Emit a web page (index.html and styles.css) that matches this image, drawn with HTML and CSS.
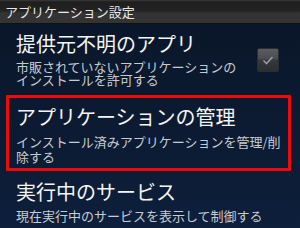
FILE: index.html
```html
<!DOCTYPE html>
<html lang="ja">
<head>
<meta charset="utf-8">
<link rel="stylesheet" href="styles.css">
</head>
<body>
<div class="screen">
  <div class="titlebar">アプリケーション設定</div>
  <div class="list">
    <div class="item item-first">
      <div class="text">
        <div class="title">提供元不明のアプリ</div>
        <div class="summary">
          <div class="line">市販されていないアプリケーションの</div>
          <div class="line">インストールを許可する</div>
        </div>
      </div>
      <div class="check">
        <svg width="22" height="24" viewBox="0 0 22 24">
          <path d="M6.5 12.5 L9.5 15.5 L15.5 9" fill="none" stroke="#9a9a9a" stroke-width="1.6"/>
        </svg>
      </div>
    </div>
    <div class="item item-mark">
      <div class="text">
        <div class="title">アプリケーションの管理</div>
        <div class="summary">
          <div class="line">インストール済みアプリケーションを管理/削</div>
          <div class="line">除する</div>
        </div>
      </div>
    </div>
    <div class="item item-last">
      <div class="text">
        <div class="title">実行中のサービス</div>
        <div class="summary">
          <div class="line">現在実行中のサービスを表示して制御する</div>
        </div>
      </div>
    </div>
  </div>
</div>
</body>
</html>
```
FILE: styles.css
```css
html, body {
  margin: 0;
  padding: 0;
}
body {
  width: 300px;
  height: 228px;
  overflow: hidden;
  font-family: "Noto Sans CJK JP", "Noto Sans", sans-serif;
  background: #0c1a2f;
}
.screen {
  width: 300px;
  height: 228px;
  display: flex;
  flex-direction: column;
  background: linear-gradient(180deg, #0a1628 0%, #0c1b33 60%, #0d1f3b 100%);
}
.titlebar {
  height: 24px;
  box-sizing: border-box;
  padding-left: 5px;
  font-size: 13px;
  line-height: 24px;
  color: #e8e8e8;
  background: linear-gradient(180deg, #3a3a3a 0px, #1e1e1e 2px, #232323 11px, #333333 13px, #343434 23px);
  border-bottom: 1px solid #111;
}
.list {
  display: flex;
  flex-direction: column;
}
.item {
  display: flex;
  align-items: center;
  color: #ffffff;
}
.item-first {
  padding: 8px 21px 0 16px;
  height: 70px;
  box-sizing: border-box;
}
.text {
  flex: 1;
}
.title {
  font-size: 20px;
  line-height: 24px;
  color: #f4f4f4;
  white-space: nowrap;
}
.summary {
  margin-top: 4px;
  font-size: 13px;
  color: #c8ccd2;
  white-space: nowrap;
}
.summary .line {
  height: 13px;
  line-height: 13px;
}
.item-first .text {
  align-self: flex-start;
}
.check {
  width: 22px;
  height: 24px;
  box-sizing: border-box;
  border: 1px solid #2a2f36;
  border-radius: 2px;
  background: linear-gradient(180deg, #5a5c60 0%, #4a4c50 45%, #36383c 50%, #2c2e32 100%);
  margin-top: -6px;
}
.check svg {
  display: block;
  margin: -1px;
}
.item-mark {
  margin: 1px 9px 0 6px;
  border: 3px solid #ee0a0a;
  border-radius: 1px;
  padding: 7px 0 6px 7px;
  height: 76px;
  box-sizing: border-box;
  align-items: flex-start;
}
.item-mark .summary {
  margin-top: 5px;
}
.item-mark .summary .line {
  height: 15px;
  line-height: 15px;
}
.item-last {
  padding: 9px 0 0 16px;
  align-items: flex-start;
}
.item-last .summary {
  margin-top: 5px;
}
```
